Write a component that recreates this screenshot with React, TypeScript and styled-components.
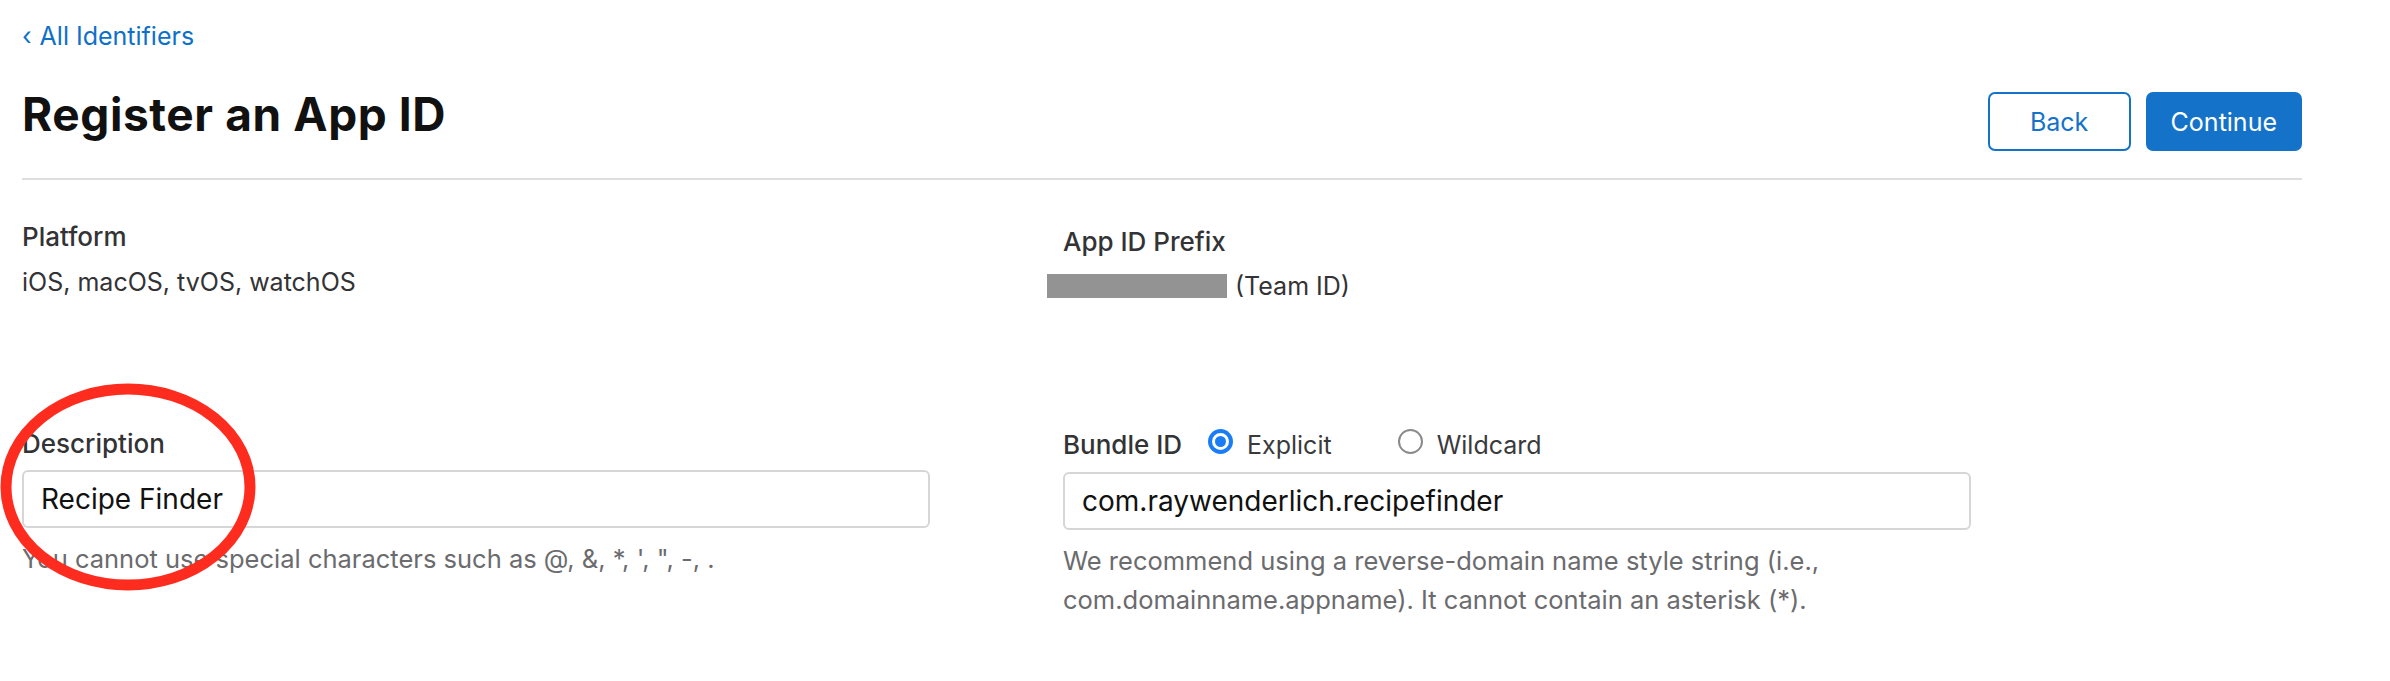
import React from "react";
import styled, { createGlobalStyle } from "styled-components";

const GlobalStyle = createGlobalStyle`
    html, body {
        margin: 0;
        padding: 0;
        background: #ffffff;
    }
    body {
        font-family: Inter, "Noto Sans", "Liberation Sans", sans-serif;
        color: #333336;
    }
`

const Page = styled.div`
    position: relative;
    padding: 20px 88px 0 22px;
`

const BackLink = styled.a`
    display: inline-block;
    font-size: 25px;
    line-height: 32px;
    color: #0f70c8;
    text-decoration: none;
    cursor: pointer;
`

const Chevron = styled.span`
    margin-right: 8px;
`

const Header = styled.div`
    display: flex;
    justify-content: space-between;
    align-items: flex-start;
    margin-top: 35px;
    padding-bottom: 27px;
    border-bottom: 2px solid #dedede;
`

const Title = styled.h1`
    margin: 0;
    font-size: 46px;
    line-height: 54px;
    font-weight: 700;
    color: #111111;
    letter-spacing: 0.6px;
`

const ButtonGroup = styled.div`
    display: flex;
    gap: 15px;
    margin-top: 5px;
`

const Button = styled.button<{ $primary?: boolean }>`
    box-sizing: border-box;
    height: 59px;
    min-width: 143px;
    padding: 0 23px;
    border-radius: 7px;
    border: 2px solid #1473c9;
    background: ${p => p.$primary ? "#1473c9" : "#ffffff"};
    color: ${p => p.$primary ? "#ffffff" : "#1473c9"};
    font-family: inherit;
    font-size: 25px;
    cursor: pointer;
`

const FormGrid = styled.div`
    display: grid;
    grid-template-columns: 1041px 912px;
    row-gap: 128px;
    padding-top: 42px;
`

const Field = styled.div<{ $offset?: number }>`
    display: flex;
    flex-direction: column;
    padding-top: ${p => p.$offset ?? 0}px;
`

const Label = styled.div`
    font-size: 26px;
    line-height: 30px;
    font-weight: 500;
    color: #333336;
`

const LabelRow = styled.div`
    display: flex;
    align-items: center;
`

const Value = styled.div`
    margin-top: 15px;
    font-size: 25px;
    line-height: 30px;
    color: #333336;
`

const PrefixRow = styled.div`
    display: flex;
    align-items: center;
    gap: 8px;
    margin-top: 14px;
    font-size: 25px;
    line-height: 30px;
    color: #333336;
`

const Redacted = styled.span`
    display: inline-block;
    width: 180px;
    height: 24px;
    margin-left: -16px;
    background: #939393;
`

const RadioOption = styled.label<{ $first?: boolean }>`
    display: flex;
    align-items: center;
    gap: 14px;
    margin-left: ${p => p.$first ? 26 : 66}px;
    font-size: 25px;
    line-height: 30px;
    color: #3a3a3c;
    cursor: pointer;
`

const RadioCircle = styled.span<{ $checked?: boolean }>`
    box-sizing: border-box;
    display: inline-flex;
    align-items: center;
    justify-content: center;
    width: 25px;
    height: 25px;
    margin-bottom: 7px;
    border-radius: 50%;
    border: ${p => p.$checked ? "4px solid #1a7df6" : "2px solid #8a8a8a"};
    background: #ffffff;

    &::after {
        content: "";
        display: ${p => p.$checked ? "block" : "none"};
        width: 11px;
        height: 11px;
        border-radius: 50%;
        background: #1a7df6;
    }
`

const TextInput = styled.input`
    box-sizing: border-box;
    width: 908px;
    height: 58px;
    margin-top: 11px;
    padding: 0 17px;
    border: 2px solid #d6d6d6;
    border-radius: 6px;
    font-family: inherit;
    font-size: 28px;
    color: #111111;
    background: #ffffff;
    outline: none;
`

const Helper = styled.p`
    margin: 11px 0 0;
    max-width: 908px;
    font-size: 25.5px;
    line-height: 39px;
    color: #6b6b6e;
`

const Annotation = styled.svg`
    position: absolute;
    left: 0;
    top: 382px;
    pointer-events: none;
`

export default function App() {
    return (
        <>
            <GlobalStyle />
            <Page>
                <BackLink><Chevron>‹</Chevron>All Identifiers</BackLink>
                <Header>
                    <Title>Register an App ID</Title>
                    <ButtonGroup>
                        <Button>Back</Button>
                        <Button $primary>Continue</Button>
                    </ButtonGroup>
                </Header>
                <FormGrid>
                    <Field>
                        <Label>Platform</Label>
                        <Value>iOS, macOS, tvOS, watchOS</Value>
                    </Field>
                    <Field $offset={5}>
                        <Label>App ID Prefix</Label>
                        <PrefixRow>
                            <Redacted />
                            (Team ID)
                        </PrefixRow>
                    </Field>
                    <Field>
                        <Label>Description</Label>
                        <TextInput defaultValue="Recipe Finder" />
                        <Helper>You cannot use special characters such as @, &amp;, *, ', ", -, .</Helper>
                    </Field>
                    <Field>
                        <LabelRow>
                            <Label>Bundle ID</Label>
                            <RadioOption $first>
                                <RadioCircle $checked />
                                Explicit
                            </RadioOption>
                            <RadioOption>
                                <RadioCircle />
                                Wildcard
                            </RadioOption>
                        </LabelRow>
                        <TextInput defaultValue="com.raywenderlich.recipefinder" />
                        <Helper>We recommend using a reverse-domain name style string (i.e., com.domainname.appname). It cannot contain an asterisk (*).</Helper>
                    </Field>
                </FormGrid>
                <Annotation width="262" height="214" viewBox="0 0 262 214">
                    <ellipse cx="128" cy="105" rx="122" ry="98" fill="none" stroke="#fe2c1f" strokeWidth="11" />
                </Annotation>
            </Page>
        </>
    );
}
